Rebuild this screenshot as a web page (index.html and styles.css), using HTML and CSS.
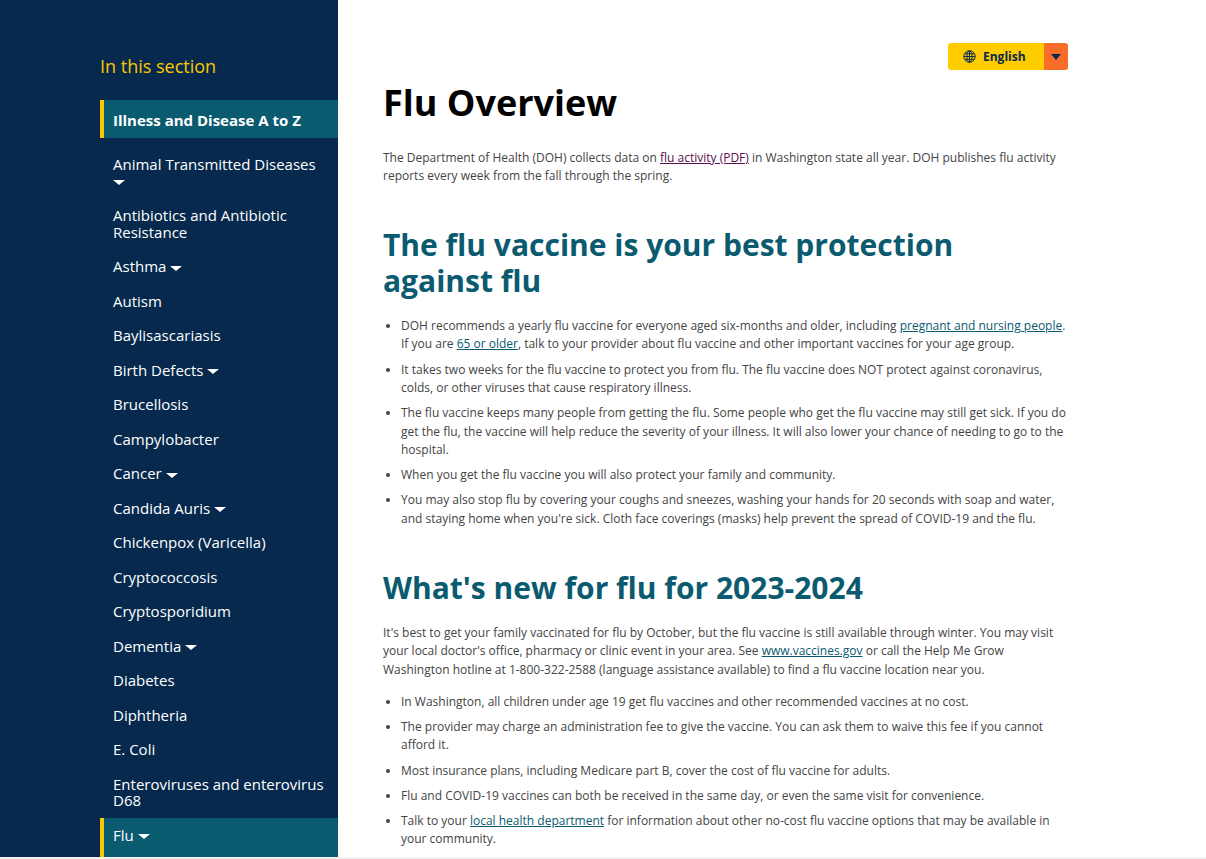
FILE: index.html
```html
<!DOCTYPE html>
<html lang="en">
<head>
<meta charset="utf-8">
<title>Flu Overview</title>
<link rel="stylesheet" href="styles.css">
</head>
<body>
<div class="page">
  <aside class="sidebar">
    <h2 class="section-title">In this section</h2>
    <nav class="side-nav">
      <a class="nav-item active strong">Illness and Disease A to Z</a>
      <a class="nav-item">Animal Transmitted Diseases <i class="caret"></i></a>
      <a class="nav-item">Antibiotics and Antibiotic Resistance</a>
      <a class="nav-item">Asthma <i class="caret"></i></a>
      <a class="nav-item">Autism</a>
      <a class="nav-item">Baylisascariasis</a>
      <a class="nav-item">Birth Defects <i class="caret"></i></a>
      <a class="nav-item">Brucellosis</a>
      <a class="nav-item">Campylobacter</a>
      <a class="nav-item">Cancer <i class="caret"></i></a>
      <a class="nav-item">Candida Auris <i class="caret"></i></a>
      <a class="nav-item">Chickenpox (Varicella)</a>
      <a class="nav-item">Cryptococcosis</a>
      <a class="nav-item">Cryptosporidium</a>
      <a class="nav-item">Dementia <i class="caret"></i></a>
      <a class="nav-item">Diabetes</a>
      <a class="nav-item">Diphtheria</a>
      <a class="nav-item">E. Coli</a>
      <a class="nav-item">Enteroviruses and enterovirus D68</a>
      <a class="nav-item active open">Flu <i class="caret"></i></a>
    </nav>
  </aside>
  <main class="content">
    <div class="lang-row">
      <div class="lang">
        <span class="lang-main">
          <svg class="globe" viewBox="0 0 16 16" aria-hidden="true"><circle cx="8" cy="8" r="7"/><ellipse cx="8" cy="8" rx="3.2" ry="7"/><path d="M8 1v14M1 8h14M2.2 4.6h11.6M2.2 11.4h11.6"/></svg>
          English
        </span>
        <span class="lang-toggle"><i class="caret dark"></i></span>
      </div>
    </div>
    <h1>Flu Overview</h1>
    <p class="intro">The Department of Health (DOH) collects data on <a class="visited">flu activity (PDF)</a> in Washington state all year. DOH publishes flu activity reports every week from the fall through the spring.</p>
    <h2 class="heading">The flu vaccine is your best protection against flu</h2>
    <ul>
      <li>DOH recommends a yearly flu vaccine for everyone aged six-months and older, including <a>pregnant and nursing people</a>. If you are <a>65 or older</a>, talk to your provider about flu vaccine and other important vaccines for your age group.</li>
      <li>It takes two weeks for the flu vaccine to protect you from flu. The flu vaccine does NOT protect against coronavirus, colds, or other viruses that cause respiratory illness.</li>
      <li>The flu vaccine keeps many people from getting the flu. Some people who get the flu vaccine may still get sick. If you do get the flu, the vaccine will help reduce the severity of your illness. It will also lower your chance of needing to go to the hospital.</li>
      <li>When you get the flu vaccine you will also protect your family and community.</li>
      <li>You may also stop flu by covering your coughs and sneezes, washing your hands for 20 seconds with soap and water, and staying home when you're sick. Cloth face coverings (masks) help prevent the spread of COVID-19 and the flu.</li>
    </ul>
    <h2 class="heading">What's new for flu for 2023-2024</h2>
    <p>It's best to get your family vaccinated for flu by October, but the flu vaccine is still available through winter. You may visit your local doctor's office, pharmacy or clinic event in your area. See <a>www.vaccines.gov</a> or call the Help Me Grow Washington hotline at 1-800-322-2588 (language assistance available) to find a flu vaccine location near you.</p>
    <ul>
      <li>In Washington, all children under age 19 get flu vaccines and other recommended vaccines at no cost.</li>
      <li>The provider may charge an administration fee to give the vaccine. You can ask them to waive this fee if you cannot afford it.</li>
      <li>Most insurance plans, including Medicare part B, cover the cost of flu vaccine for adults.</li>
      <li>Flu and COVID-19 vaccines can both be received in the same day, or even the same visit for convenience.</li>
      <li>Talk to your <a>local health department</a> for information about other no-cost flu vaccine options that may be available in your community.</li>
    </ul>
  </main>
</div>
</body>
</html>
```

FILE: styles.css
```css
* { box-sizing: border-box; }
html, body { margin: 0; height: 100%; overflow: hidden; background: #f0f0f0; }
body { font-family: "Open Sans", sans-serif; color: #444; }
.page { display: flex; height: 857px; overflow: hidden; background: #fff; }
.sidebar { flex: 0 0 338px; height: 100%; overflow: hidden; background: #06294d; padding: 53px 0 0 100px; }
.section-title { margin: 0 0 21px; font-size: 18px; line-height: 26px; font-weight: 400; color: #fdc700; }
.side-nav { display: flex; flex-direction: column; }
.nav-item { display: block; padding: 8.875px 8px 8.875px 13px; font-size: 15px; line-height: 16.75px; color: #fff; text-decoration: none; }
.nav-item.active { background: #0a5a70; border-left: 4px solid #fdc700; padding-left: 9px; }
.nav-item.strong { font-weight: 700; padding-top: 11.5px; padding-bottom: 9.75px; margin-bottom: 8.75px; }
.nav-item.open { padding-bottom: 24px; }
.caret { display: inline-block; width: 0; height: 0; margin-left: 0; vertical-align: middle; border-left: 6px solid transparent; border-right: 6px solid transparent; border-top: 5.5px solid #fff; }
.caret.dark { border-left-width: 5px; border-right-width: 5px; border-top: 6px solid #06294d; margin: 0; }
.content { flex: 0 0 685px; margin-left: 45px; padding-top: 43px; font-size: 12px; line-height: 18.4px; }
.lang-row { display: flex; justify-content: flex-end; height: 27px; }
.lang { display: flex; width: 120px; height: 27px; border-radius: 3px; overflow: hidden; font-size: 12px; line-height: 18px; font-weight: 700; color: #06294d; }
.lang-main { flex: 1; display: flex; align-items: center; gap: 7px; padding-left: 15px; background: #fc0; }
.globe { width: 13px; height: 13px; fill: none; stroke: #06294d; stroke-width: 1.2; }
.lang-toggle { flex: 0 0 24px; display: flex; align-items: center; justify-content: center; background: #f96d2a; }
h1 { margin: 11px 0 25px; font-size: 36px; line-height: 43px; font-weight: 700; color: #000; }
p { margin: 0 0 13.6px; }
.intro { margin-bottom: 41.2px; }
.heading { margin: 0 0 18px; font-size: 30px; line-height: 36px; font-weight: 700; color: #0a5a70; }
ul { margin: 0 0 42px; padding: 0 0 0 18px; }
li { margin-bottom: 6.75px; }
a { color: #0a5a70; text-decoration: underline; }
a.visited { color: #5b1050; }
```
